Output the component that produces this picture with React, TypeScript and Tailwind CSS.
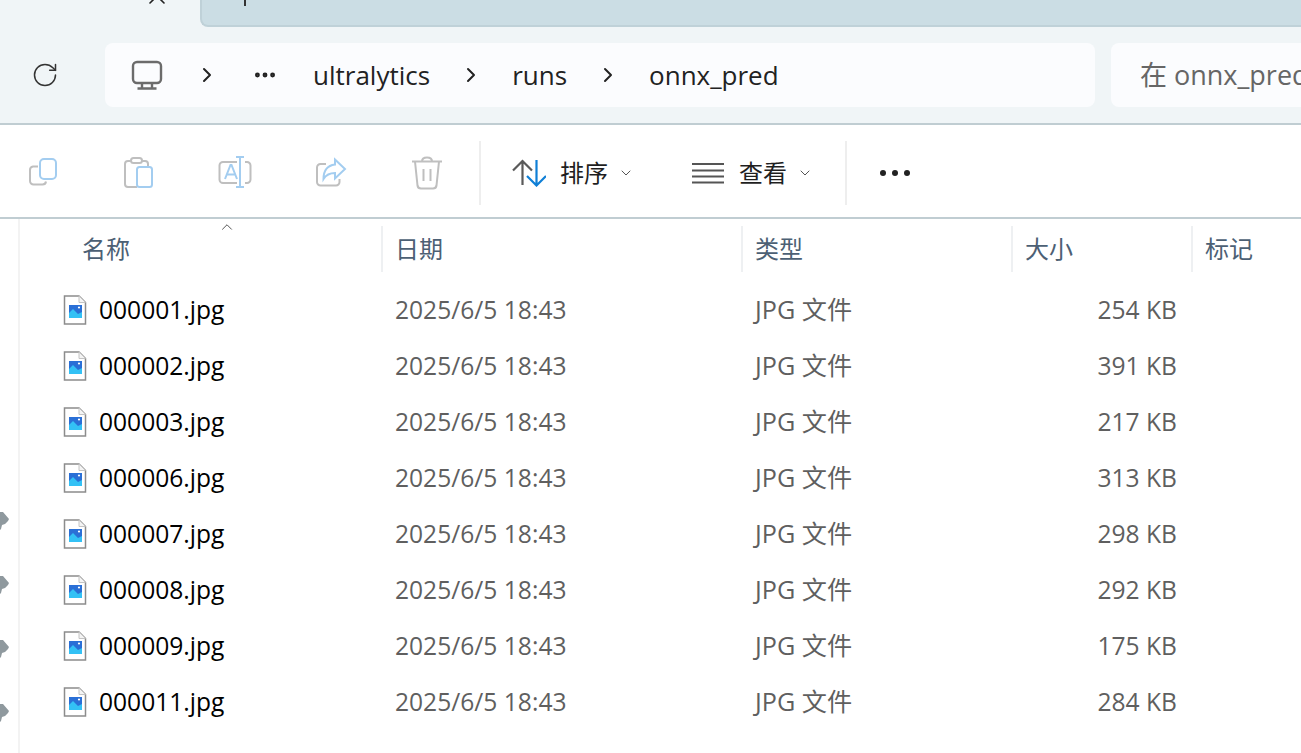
import { X, RotateCw, ChevronRight, ChevronDown, ChevronUp, MoreHorizontal } from 'lucide-react';

const font = { fontFamily: '"Open Sans", "Noto Sans CJK SC", sans-serif' };

const files = [
  { name: '000001.jpg', size: '254 KB' },
  { name: '000002.jpg', size: '391 KB' },
  { name: '000003.jpg', size: '217 KB' },
  { name: '000006.jpg', size: '313 KB' },
  { name: '000007.jpg', size: '298 KB' },
  { name: '000008.jpg', size: '292 KB' },
  { name: '000009.jpg', size: '175 KB' },
  { name: '000011.jpg', size: '284 KB' },
];

const columns = [
  { label: '名称', width: 'w-[363px]', pad: 'pl-[62px]', border: 'border-r-2' },
  { label: '日期', width: 'w-[360px]', pad: 'pl-3', border: 'border-r-2' },
  { label: '类型', width: 'w-[270px]', pad: 'pl-3', border: 'border-r-2' },
  { label: '大小', width: 'w-[180px]', pad: 'pl-3', border: 'border-r-2' },
  { label: '标记', width: 'w-[108px]', pad: 'pl-3', border: '' },
];

const GRAY = '#bfbfbf';
const BLUE = '#a3cdf0';

const CopyIcon = () => (
  <svg width="32" height="32" viewBox="0 0 32 32" fill="none" strokeWidth="2">
    <path d="M11 9.5H6a3.5 3.5 0 0 0-3 3.5v11a3.5 3.5 0 0 0 3.500 3.500h9a3.500 3.500 0 0 0 3.500-3" stroke={GRAY} />
    <rect x="13" y="2" width="16" height="20" rx="4" stroke={BLUE} />
  </svg>
);

const PasteIcon = () => (
  <svg width="32" height="32" viewBox="0 0 32 32" fill="none" strokeWidth="2">
    <path d="M8 4H5a3 3 0 0 0-3 3v20a3 3 0 0 0 3 3h9M19 4h3a3 3 0 0 1 3 3v3" stroke={GRAY} />
    <rect x="8" y="1" width="11" height="5" rx="2.500" stroke={GRAY} />
    <rect x="14" y="10" width="15" height="20" rx="2.500" stroke={BLUE} />
  </svg>
);

const RenameIcon = () => (
  <svg width="34" height="34" viewBox="0 0 34 34" fill="none" strokeWidth="2">
    <path d="M19 6H5a3.500 3.500 0 0 0-3.500 3.500v14A3.500 3.500 0 0 0 5 27h14M27 6h2a3.500 3.500 0 0 1 3.500 3.500v14A3.500 3.500 0 0 1 29 27h-2" stroke={GRAY} />
    <path d="M18 1h8M22 1v30M18 31h8" stroke={BLUE} />
    <path d="M7 23l5.500-14h1L19 23M9 18.500h8" stroke={BLUE} />
  </svg>
);

const ShareIcon = () => (
  <svg width="32" height="32" viewBox="0 0 32 32" fill="none" strokeWidth="2">
    <path d="M11 7H5.500A3.500 3.500 0 0 0 2 10.500V25a3.500 3.500 0 0 0 3.500 3.500H21a3.500 3.500 0 0 0 3.500-3.500v-3" stroke={GRAY} />
    <path d="M20 2.500l10 9.500-10 9.500v-5.500c-6 0-9 2-11.500 6 0-8 4-13.500 11.500-14.500z" stroke={BLUE} />
  </svg>
);

const TrashIcon = () => (
  <svg width="32" height="34" viewBox="0 0 32 34" fill="none" strokeWidth="2" stroke={GRAY}>
    <path d="M1 5.500h30M11 5.500c0-2.500 2-4 5-4s5 1.500 5 4" />
    <path d="M4 5.500l2.500 24a3.500 3.500 0 0 0 3.500 3h12a3.500 3.500 0 0 0 3.500-3l2.500-24" />
    <path d="M12.500 13v12M19.500 13v12" />
  </svg>
);

const SortIcon = () => (
  <svg width="34" height="28" viewBox="0 0 34 28" fill="none" strokeWidth="2.200">
    <path d="M1 11.500L10.500 2 20 11.500M10.500 2v24" stroke="#5a5a5a" />
    <path d="M15 17l9.500 9.500L34 17M24.500 1v25" stroke="#0f7fd6" />
  </svg>
);

const ViewIcon = () => (
  <svg width="32" height="22" viewBox="0 0 32 22" fill="none" strokeWidth="2" stroke="#555">
    <path d="M0 2h32M0 8.500h32M0 14.500h32M0 20.500h32" />
  </svg>
);

const MonitorIcon = () => (
  <svg width="32" height="30" viewBox="0 0 32 30" fill="none" stroke="#6b6b6b" strokeWidth="2.400">
    <rect x="2" y="2" width="28" height="21" rx="4" />
    <path d="M11 23v5M21 23v5M6.500 28.500h19" />
  </svg>
);

const FileIcon = () => (
  <svg width="24" height="30" viewBox="0 0 24 30" className="shrink-0">
    <path d="M1.500 1h14.500l6.500 6.500V29H1.500z" fill="#fff" stroke="#8c8c8c" strokeWidth="1.500" />
    <path d="M16 1v6.500h6.500" fill="#f4f4f4" stroke="#c4c4c4" strokeWidth="1" />
    <rect x="6" y="10" width="13" height="13" fill="#2a6fd6" />
    <path d="M6 23v-5l4-4 5 5 4-2v6z" fill="#33c1f5" />
    <circle cx="16" cy="12.500" r="1.100" fill="#fff" />
  </svg>
);

const PinIcon = () => (
  <svg width="12" height="24" viewBox="0 0 12 24" className="block">
    <path d="M0 3h3l6 7-1 2-3 3-3 1-1 4-1 1z" fill="#8f999e" />
  </svg>
);

const Separator = () => <div className="w-[2px] h-16 bg-[#eeeeee] shrink-0" />;

export default function App() {
  return (
    <div className="w-[1301px] h-[753px] overflow-hidden bg-white flex flex-col" style={font}>
      {/* Tab strip */}
      <div className="h-[27px] flex bg-[#f0f5f7] shrink-0 overflow-hidden">
        <div className="w-[200px] flex items-start pl-[143px]">
          <X className="w-[28px] h-[28px] -mt-[18px] text-[#222] shrink-0" strokeWidth={1.4} />
        </div>
        <div className="flex-1 bg-[#cbdde4] border-b-2 border-l-2 border-[#bfd1d8] rounded-bl-lg pl-[42px]">
          <div className="w-[2px] h-[6px] bg-[#333]" />
        </div>
      </div>

      {/* Address row */}
      <div className="h-[98px] bg-[#f0f5f7] border-b-2 border-[#c0cdd2] shrink-0 flex items-start pt-4 overflow-hidden">
        <div className="w-[105px] h-16 flex items-center justify-center shrink-0">
          <RotateCw className="w-[28px] h-[28px] text-[#333] -ml-[15px]" strokeWidth={1.3} />
        </div>
        <div className="w-[990px] h-16 bg-[#fbfcfe] rounded-lg flex items-center pl-[26px] shrink-0 text-[#222] text-[26px]">
          <MonitorIcon />
          <ChevronRight className="w-6 h-6 ml-[32px] text-[#222]" strokeWidth={2} />
          <MoreHorizontal className="w-[26px] h-[26px] ml-[33px] text-[#222]" strokeWidth={2.5} />
          <span className="ml-[35px]">ultralytics</span>
          <ChevronRight className="w-6 h-6 ml-[29px] text-[#222]" strokeWidth={2} />
          <span className="ml-[29px]">runs</span>
          <ChevronRight className="w-6 h-6 ml-[29px] text-[#222]" strokeWidth={2} />
          <span className="ml-[29px]">onnx_pred</span>
        </div>
        <div className="ml-4 flex-1 h-16 bg-[#fbfcfe] rounded-l-lg flex items-center pl-[29px] text-[27px] text-[#666] whitespace-nowrap overflow-hidden">
          在 onnx_pred
        </div>
      </div>

      {/* Command bar */}
      <div className="h-[94px] border-b-2 border-[#c0cdd2] shrink-0 flex items-center pl-[27px] pt-1">
        <div className="flex items-center gap-[64px]">
          <CopyIcon />
          <PasteIcon />
          <div className="-mx-[1px]"><RenameIcon /></div>
          <ShareIcon />
          <TrashIcon />
        </div>
        <div className="ml-[36px]"><Separator /></div>
        <div className="ml-[31px]"><SortIcon /></div>
        <span className="ml-[14px] text-[24px] text-[#1f1f1f]">排序</span>
        <ChevronDown className="w-4 h-4 ml-[10px] text-[#555]" strokeWidth={1.5} />
        <div className="ml-[58px]"><ViewIcon /></div>
        <span className="ml-[15px] text-[24px] text-[#1f1f1f]">查看</span>
        <ChevronDown className="w-4 h-4 ml-[10px] text-[#555]" strokeWidth={1.5} />
        <div className="ml-[32px]"><Separator /></div>
        <div className="ml-[33px] flex gap-[6px]">
          <span className="w-[6px] h-[6px] rounded-full bg-[#222]" />
          <span className="w-[6px] h-[6px] rounded-full bg-[#222]" />
          <span className="w-[6px] h-[6px] rounded-full bg-[#222]" />
        </div>
      </div>

      <div className="flex-1 flex min-h-0">
        {/* Collapsed nav pane, pins clipped at the window edge */}
        <div className="w-[20px] shrink-0 border-r-2 border-[#f3f3f3] overflow-hidden flex flex-col gap-10 pt-[290px]">
          <PinIcon />
          <PinIcon />
          <PinIcon />
          <PinIcon />
        </div>

        <div className="flex-1 min-w-0 relative">
          <ChevronUp className="absolute left-[198px] top-[-1px] w-[18px] h-[18px] text-[#444]" strokeWidth={1.2} />
          {/* Column headers */}
          <div className="flex h-[50px] mt-[3px] pt-1 text-[24px] text-[#4c6074]">
            {columns.map((c) => (
              <div key={c.label} className={`${c.width} ${c.pad} ${c.border} shrink-0 h-full flex items-center border-[#eef0f2]`}>
                {c.label}
              </div>
            ))}
          </div>
          {/* Rows */}
          <div className="mt-[10px] flex flex-col">
            {files.map((f) => (
              <div key={f.name} className="h-14 flex items-center text-[24.6px]">
                <div className="w-[363px] shrink-0 flex items-center pl-[43px]">
                  <FileIcon />
                  <span className="ml-3 text-black">{f.name}</span>
                </div>
                <div className="w-[360px] shrink-0 pl-3 text-[#5f5f5f]">2025/6/5 18:43</div>
                <div className="w-[270px] shrink-0 pl-3 text-[#5f5f5f] text-[25.2px]">JPG 文件</div>
                <div className="w-[164px] shrink-0 text-right text-[#5f5f5f]">{f.size}</div>
              </div>
            ))}
          </div>
        </div>
      </div>
    </div>
  );
}
